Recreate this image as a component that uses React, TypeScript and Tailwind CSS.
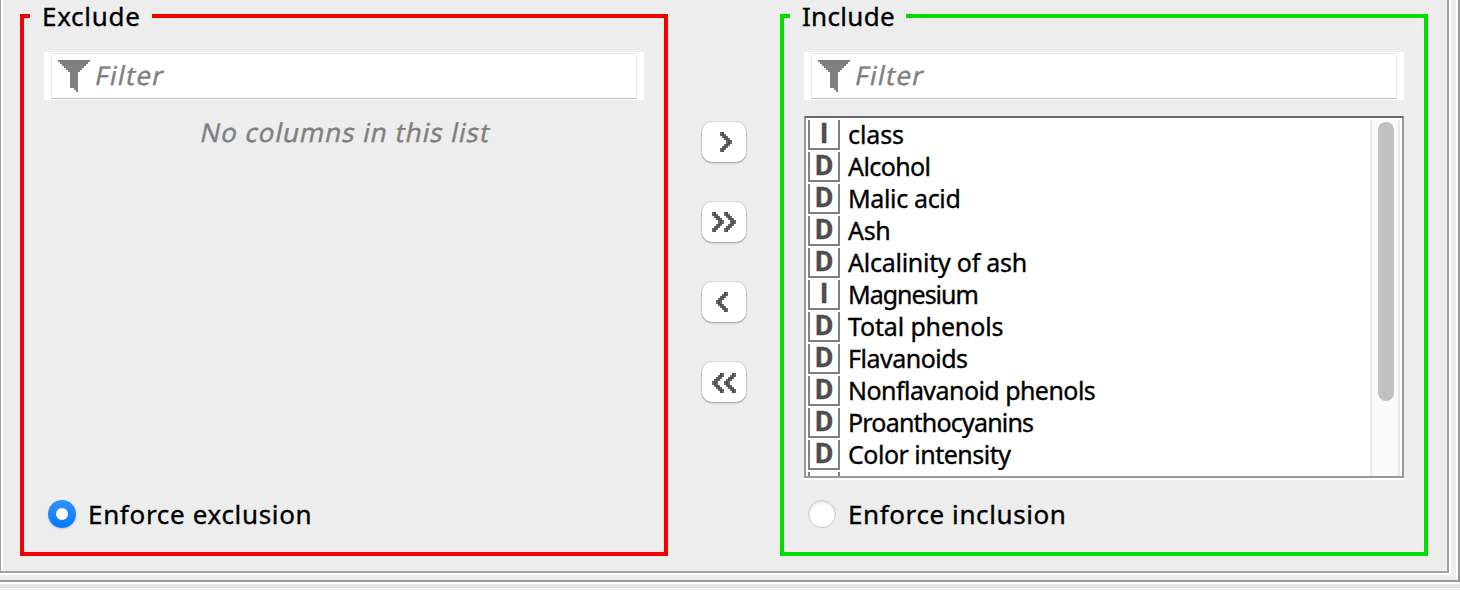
import React from 'react';

const COLUMNS: { name: string; type: 'I' | 'D'; fit: string }[] = [
  { name: 'class', type: 'I', fit: 'tracking-[-0.1px]' },
  { name: 'Alcohol', type: 'D', fit: 'tracking-[-0.6px]' },
  { name: 'Malic acid', type: 'D', fit: 'tracking-[-0.35px]' },
  { name: 'Ash', type: 'D', fit: 'tracking-[-0.3px]' },
  { name: 'Alcalinity of ash', type: 'D', fit: 'tracking-[-0.25px]' },
  { name: 'Magnesium', type: 'I', fit: 'tracking-[-1px]' },
  { name: 'Total phenols', type: 'D', fit: 'tracking-[-0.15px]' },
  { name: 'Flavanoids', type: 'D', fit: 'tracking-[-0.5px]' },
  { name: 'Nonflavanoid phenols', type: 'D', fit: 'tracking-[-0.55px]' },
  { name: 'Proanthocyanins', type: 'D', fit: 'tracking-[-0.8px]' },
  { name: 'Color intensity', type: 'D', fit: 'tracking-[-0.5px]' },
];

// Cell coordinates [start, width] of each chevron row on a two pixel grid.
const ROWS = [[0, 2], [0, 3], [1, 3], [2, 3], [3, 3], [3, 3], [2, 3], [1, 3], [0, 3], [0, 2]];

function Chevron({ x, y, left }: { x: number; y: number; left?: boolean }) {
  return (
    <g>
      {ROWS.map(([s, w], i) =>
        Array.from({ length: w }, (_, k) => {
          const col = left ? 5 - s - k : s + k;
          return (
            <rect key={`${i}-${k}`} x={x + col * 2} y={y + i * 2} width={2} height={2} opacity={k === 1 ? 1 : 0.85} />
          );
        }),
      )}
    </g>
  );
}

function MoveButton({ at, y = 10, left, label }: { at: number[]; y?: number; left?: boolean; label: string }) {
  return (
    <button
      aria-label={label}
      className="h-10 w-11 rounded-[10px] bg-white shadow-[0_0_0_1px_rgba(0,0,0,0.07),0_1px_2px_rgba(0,0,0,0.3)]"
    >
      <svg width="44" height="40" viewBox="0 0 44 40" fill="#4d4d4d" shapeRendering="crispEdges">
        {at.map((x) => (
          <Chevron key={x} x={x} y={y} left={left} />
        ))}
      </svg>
    </button>
  );
}

function FilterField() {
  return (
    <div className="mx-5 mt-5 h-12 bg-white px-[7px] pt-px">
      <div className="flex h-[46px] items-center border border-[#e8e8e8] border-b-[#bdbdbd] pl-1.5">
        <svg width="32" height="32" viewBox="0 0 16 16" fill="#808080" shapeRendering="crispEdges">
          <path d="M0 0H16V1H15V2H14V3H13V4H12V5H11V6H10V16H9V15H8V14H6V6H5V5H4V4H3V3H2V2H1V1H0Z" />
        </svg>
        <span className="mb-0.5 ml-1.5 inline-block -skew-x-12 text-[26px] leading-8 tracking-[1.2px] text-[#808080]">
          Filter
        </span>
      </div>
    </div>
  );
}

export default function App() {
  return (
    <div className="flex h-[590px] w-[1460px] flex-col overflow-hidden bg-[#ededed] font-['Noto_Sans','Open_Sans',sans-serif] text-black [-webkit-text-stroke:0.35px]">
      <div className="h-[584px] border-b-2 border-white">
        <div className="flex h-[582px] border-r-2 border-b-2 border-[#9a9a9a]">
          <div className="h-[580px] w-[1458px] border-r-2 border-white">
            <div className="h-[575px] w-[1451px] border-r-2 border-b-2 border-white">
              <div className="h-[573px] border-r-2 border-b-2 border-l border-[#a3a3a3]">
                <div className="flex h-[571px] border-l-2 border-white pl-[17px]">
                  <fieldset className="flex h-[556px] w-[648px] flex-col border-4 border-[#f50000]">
                    <legend className="ml-1.5 h-8 w-[122px] pl-3 text-[26px] leading-8 tracking-[0.7px]">Exclude</legend>
                    <FilterField />
                    <p className="mt-4 -skew-x-12 pl-1 text-center text-[26px] leading-8 tracking-[0.9px] text-[#808080]">
                      No columns in this list
                    </p>
                    <label className="mt-[350px] ml-6 flex h-8 items-center">
                      <span className="flex size-7 items-center justify-center rounded-full bg-gradient-to-b from-[#2f93ff] to-[#0077ff] shadow-[0_1px_2px_rgba(0,122,255,0.3)]">
                        <span className="size-3 rounded-full bg-white" />
                      </span>
                      <span className="ml-3 text-[26px] tracking-[0.67px]">Enforce exclusion</span>
                    </label>
                  </fieldset>

                  <div className="flex w-28 flex-col items-center gap-10 pt-[122px]">
                    <MoveButton at={[18]} label="Include selected" />
                    <MoveButton at={[10, 22]} label="Include all" />
                    <MoveButton at={[14]} left label="Exclude selected" />
                    <MoveButton at={[10, 22]} y={11} left label="Exclude all" />
                  </div>

                  <fieldset className="flex h-[556px] w-[648px] flex-col border-4 border-[#00e000]">
                    <legend className="ml-1.5 h-8 w-[116px] pl-3 text-[26px] leading-8 tracking-[0.3px]">Include</legend>
                    <FilterField />
                    <div className="mx-5 mt-4 border-b-2 border-white">
                      <div className="flex h-[362px] overflow-hidden border-2 border-[#999999] border-t-[#686868] bg-white">
                        <ul className="flex-1 pl-0.5">
                          {COLUMNS.map((c) => (
                            <li key={c.name} className="flex h-8 items-end">
                              <span className="flex h-[30px] w-8 items-center justify-center border-x-2 border-b-2 border-[#808080] font-['Roboto',sans-serif] text-[28px] leading-7 font-bold text-[#4d4d4d]">
                                {c.type}
                              </span>
                              <span className={`ml-2 text-[25px] leading-[31px] whitespace-pre ${c.fit}`}>{c.name}</span>
                            </li>
                          ))}
                          <li className="flex h-8 items-end">
                            <span className="h-[30px] w-8 border-x-2 border-b-2 border-[#808080]" />
                          </li>
                        </ul>
                        <div className="mt-0.5 mr-0.5 w-[30px] border-x-2 border-[#e9e9e9] bg-[#fafafa] pt-0.5 pl-1.5">
                          <div className="h-[279px] w-4 rounded-full bg-[#c1c1c1]" />
                        </div>
                      </div>
                    </div>
                    <label className="mt-[18px] ml-6 flex h-8 items-center">
                      <span className="size-7 rounded-full border border-[#c9c9c9] bg-white shadow-[inset_0_2px_3px_rgba(0,0,0,0.1)]" />
                      <span className="ml-3 text-[26px] tracking-[0.6px]">Enforce inclusion</span>
                    </label>
                  </fieldset>
                </div>
              </div>
            </div>
          </div>
        </div>
      </div>
      <div className="h-1 border-b border-[#d9d9d9] bg-[#e9e9e9]" />
      <div className="h-0.5 bg-[#f3f3f3]" />
    </div>
  );
}
